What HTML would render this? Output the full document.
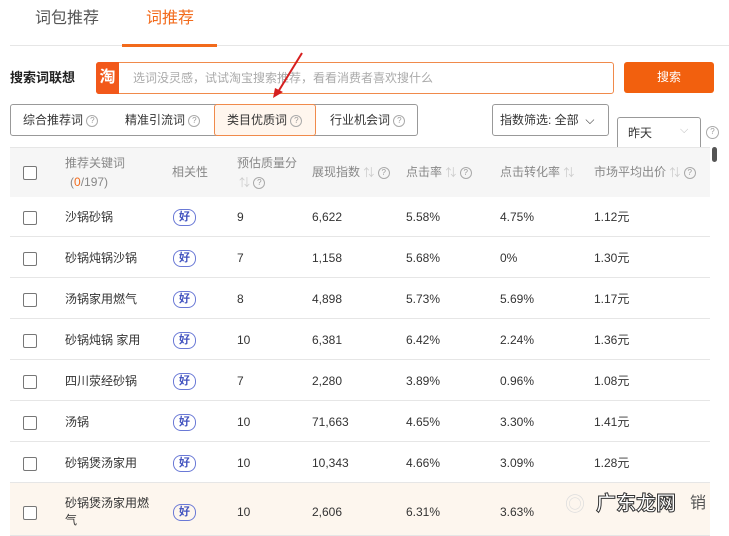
<!DOCTYPE html>
<html><head><meta charset="utf-8"><style>
body{margin:0;width:729px;height:536px;background:#fff;font-family:"Liberation Sans","Noto Sans CJK SC",sans-serif;position:relative;overflow:hidden;color:#333}
.a{position:absolute;white-space:nowrap;line-height:17px}
.q{display:inline-block;width:10px;height:10px;border:1px solid #aaa;border-radius:50%;font-size:8px;line-height:10px;text-align:center;color:#999;vertical-align:middle}
.cb{position:absolute;left:23px;width:12px;height:12px;border:1px solid #777;border-radius:2px;background:#fff}
.tag{position:absolute;left:173px;width:21px;height:15px;border:1px solid #6a79d6;border-radius:8px;color:#4455c0;font-size:11px;line-height:15px;text-align:center;font-weight:bold}
.row{position:absolute;left:10px;width:700px;border-bottom:1px solid #e6e6e6}
.t{font-size:12px;color:#333}
.h{font-size:12px;color:#888}
.s{color:#ccc;font-size:11px}
</style></head><body>
<div class="a" style="left:35px;top:8px;font-size:16px;color:#555;line-height:22px">词包推荐</div>
<div class="a" style="left:146px;top:8px;font-size:16px;color:#f26a1b;line-height:22px">词推荐</div>
<div class="a" style="left:10px;top:45px;width:720px;height:1px;background:#e6e6e6"></div>
<div class="a" style="left:122px;top:44px;width:95px;height:3px;background:#f26a1b"></div>

<div class="a" style="left:10px;top:69px;font-size:13px;font-weight:bold;color:#222">搜索词联想</div>
<div class="a" style="left:96px;top:62px;width:516px;height:30px;border:1px solid #f08a4b;border-radius:3px"></div>
<div class="a" style="left:96px;top:62px;width:23px;height:32px;background:#f2581a;border-radius:3px 0 0 3px;color:#fff;font-size:16px;font-weight:bold;line-height:32px;text-align:center">淘</div>
<div class="a" style="left:133px;top:70px;font-size:12px;color:#aaa">选词没灵感，试试淘宝搜索推荐，看看消费者喜欢搜什么</div>
<div class="a" style="left:624px;top:62px;width:90px;height:31px;background:#f2600e;border-radius:3px;color:#fff;font-size:12px;line-height:31px;text-align:center">搜索</div>
<svg class="a" style="left:270px;top:52px" width="40" height="48"><line x1="32" y1="1" x2="8" y2="40" stroke="#d61f1f" stroke-width="2"/><polygon points="3,46 5,36 13,40" fill="#d61f1f"/></svg>

<div class="a" style="left:10px;top:104px;width:406px;height:30px;border:1px solid #999;border-radius:3px"></div>
<div class="a" style="left:214px;top:104px;width:100px;height:30px;border:1px solid #f08a4b;border-radius:3px;background:#fff6ee"></div>
<div class="a t" style="left:23px;top:112px">综合推荐词 <span class="q">?</span></div>
<div class="a t" style="left:125px;top:112px">精准引流词 <span class="q">?</span></div>
<div class="a t" style="left:227px;top:112px">类目优质词 <span class="q">?</span></div>
<div class="a t" style="left:330px;top:112px">行业机会词 <span class="q">?</span></div>
<div class="a" style="left:492px;top:104px;width:115px;height:30px;border:1px solid #999;border-radius:3px"></div>
<div class="a t" style="left:500px;top:112px">指数筛选: 全部 &nbsp;⌵</div>
<div class="a" style="left:617px;top:117px;width:82px;height:34px;border:1px solid #999;border-radius:3px;background:#fff"></div>
<div class="a t" style="left:628px;top:125px">昨天</div>
<div class="a" style="left:680px;top:122px;color:#bbb;font-size:11px">⌵</div>
<div class="a" style="left:706px;top:124px"><span class="q" style="width:11px;height:11px">?</span></div>

<div class="a" style="left:10px;top:147px;width:700px;height:49px;background:#f6f6f6;border-top:1px solid #e6e6e6"></div>
<div class="a" style="left:712px;top:147px;width:5px;height:15px;background:#555;border-radius:3px"></div>
<div class="cb" style="top:166px"></div>
<div class="a h" style="left:65px;top:155px">推荐关键词</div>
<div class="a h" style="left:70px;top:174px">(<span style="color:#f26a1b">0</span>/197)</div>
<div class="a h" style="left:172px;top:164px">相关性</div>
<div class="a h" style="left:237px;top:155px">预估质量分</div>
<div class="a h" style="left:239px;top:174px"><span class="s">⇅</span> <span class="q">?</span></div>
<div class="a h" style="left:312px;top:164px">展现指数 <span class="s">⇅</span> <span class="q">?</span></div>
<div class="a h" style="left:406px;top:164px">点击率 <span class="s">⇅</span> <span class="q">?</span></div>
<div class="a h" style="left:500px;top:164px">点击转化率 <span class="s">⇅</span></div>
<div class="a h" style="left:594px;top:164px">市场平均出价 <span class="s">⇅</span> <span class="q">?</span></div>

<div class="row" style="top:196px;height:40px"></div>
<div class="row" style="top:237px;height:40px"></div>
<div class="row" style="top:278px;height:40px"></div>
<div class="row" style="top:319px;height:40px"></div>
<div class="row" style="top:360px;height:40px"></div>
<div class="row" style="top:401px;height:40px"></div>
<div class="row" style="top:442px;height:40px"></div>
<div class="row" style="top:483px;height:52px;background:#fdf6ee"></div>

<div class="cb" style="top:211px"></div><div class="a t" style="left:65px;top:209px">沙锅砂锅</div><div class="tag" style="top:209px">好</div><div class="a t" style="left:237px;top:209px">9</div><div class="a t" style="left:312px;top:209px">6,622</div><div class="a t" style="left:406px;top:209px">5.58%</div><div class="a t" style="left:500px;top:209px">4.75%</div><div class="a t" style="left:594px;top:209px">1.12元</div>
<div class="cb" style="top:252px"></div><div class="a t" style="left:65px;top:250px">砂锅炖锅沙锅</div><div class="tag" style="top:250px">好</div><div class="a t" style="left:237px;top:250px">7</div><div class="a t" style="left:312px;top:250px">1,158</div><div class="a t" style="left:406px;top:250px">5.68%</div><div class="a t" style="left:500px;top:250px">0%</div><div class="a t" style="left:594px;top:250px">1.30元</div>
<div class="cb" style="top:293px"></div><div class="a t" style="left:65px;top:291px">汤锅家用燃气</div><div class="tag" style="top:291px">好</div><div class="a t" style="left:237px;top:291px">8</div><div class="a t" style="left:312px;top:291px">4,898</div><div class="a t" style="left:406px;top:291px">5.73%</div><div class="a t" style="left:500px;top:291px">5.69%</div><div class="a t" style="left:594px;top:291px">1.17元</div>
<div class="cb" style="top:334px"></div><div class="a t" style="left:65px;top:332px">砂锅炖锅 家用</div><div class="tag" style="top:332px">好</div><div class="a t" style="left:237px;top:332px">10</div><div class="a t" style="left:312px;top:332px">6,381</div><div class="a t" style="left:406px;top:332px">6.42%</div><div class="a t" style="left:500px;top:332px">2.24%</div><div class="a t" style="left:594px;top:332px">1.36元</div>
<div class="cb" style="top:375px"></div><div class="a t" style="left:65px;top:373px">四川荥经砂锅</div><div class="tag" style="top:373px">好</div><div class="a t" style="left:237px;top:373px">7</div><div class="a t" style="left:312px;top:373px">2,280</div><div class="a t" style="left:406px;top:373px">3.89%</div><div class="a t" style="left:500px;top:373px">0.96%</div><div class="a t" style="left:594px;top:373px">1.08元</div>
<div class="cb" style="top:416px"></div><div class="a t" style="left:65px;top:414px">汤锅</div><div class="tag" style="top:414px">好</div><div class="a t" style="left:237px;top:414px">10</div><div class="a t" style="left:312px;top:414px">71,663</div><div class="a t" style="left:406px;top:414px">4.65%</div><div class="a t" style="left:500px;top:414px">3.30%</div><div class="a t" style="left:594px;top:414px">1.41元</div>
<div class="cb" style="top:457px"></div><div class="a t" style="left:65px;top:455px">砂锅煲汤家用</div><div class="tag" style="top:455px">好</div><div class="a t" style="left:237px;top:455px">10</div><div class="a t" style="left:312px;top:455px">10,343</div><div class="a t" style="left:406px;top:455px">4.66%</div><div class="a t" style="left:500px;top:455px">3.09%</div><div class="a t" style="left:594px;top:455px">1.28元</div>
<div class="cb" style="top:506px"></div><div class="a t" style="left:65px;top:495px;line-height:17px">砂锅煲汤家用燃<br>气</div><div class="tag" style="top:504px">好</div><div class="a t" style="left:237px;top:504px">10</div><div class="a t" style="left:312px;top:504px">2,606</div><div class="a t" style="left:406px;top:504px">6.31%</div><div class="a t" style="left:500px;top:504px">3.63%</div>
<div class="a" style="left:565px;top:493px;font-size:20px;color:#ddd;line-height:24px">◎</div>
<div class="a" style="left:596px;top:492px;font-size:20px;font-weight:bold;color:#fff;-webkit-text-stroke:1px #333;line-height:24px">广东龙网</div>
<div class="a" style="left:690px;top:494px;font-size:16px;color:#555;line-height:20px">销</div>
</body></html>
